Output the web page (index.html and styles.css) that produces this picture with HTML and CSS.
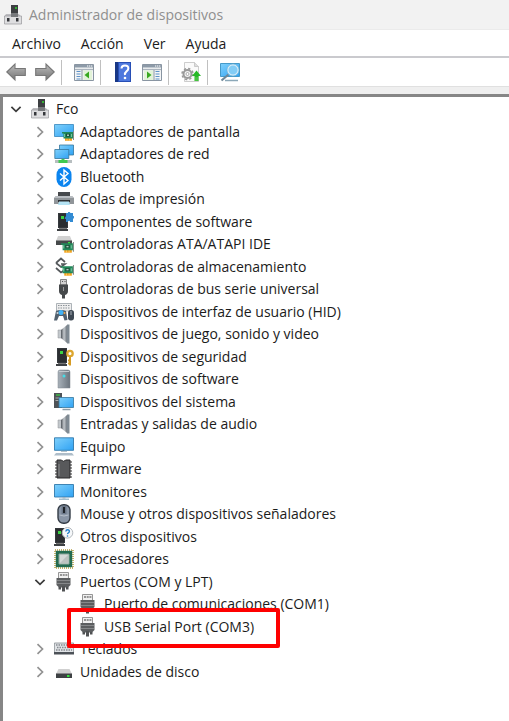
FILE: index.html
```html
<!DOCTYPE html>
<html lang="es">
  <head>
    <meta charset="UTF-8">
    <meta name="viewport" content="width=device-width, initial-scale=1.0">
    <title>Administrador de dispositivos</title>
    <link rel="stylesheet" href="styles.css">
  </head>
  <body>
    <!-- Piezas que se repiten en varios iconos -->
    <svg class="defs" aria-hidden="true">
      <defs>
        <linearGradient id="azul" x1="0" y1="0" x2="1" y2="1">
          <stop offset="0" stop-color="#7fd0fb"/><stop offset="1" stop-color="#2fa2f4"/>
        </linearGradient>
        <linearGradient id="gris" x1="0" y1="0" x2="1" y2="0">
          <stop offset="0" stop-color="#a9b2ba"/><stop offset="1" stop-color="#6b747d"/>
        </linearGradient>
        <linearGradient id="cono" x1="0" y1="0" x2="1" y2="0">
          <stop offset="0" stop-color="#50565c"/><stop offset=".5" stop-color="#c3c8cc"/><stop offset="1" stop-color="#727a82"/>
        </linearGradient>
        <linearGradient id="metal" x1="0" y1="0" x2="0" y2="1">
          <stop offset="0" stop-color="#bdbdbd"/><stop offset="1" stop-color="#747474"/>
        </linearGradient>
        <symbol id="cerrado" viewBox="0 0 12 12"><path d="M3.5 1.2 8.5 6l-5 4.8" fill="none" stroke="#929292" stroke-width="1.7"/></symbol>
        <symbol id="abierto" viewBox="0 0 12 12"><path d="M1.4 3.8 6 8.4l4.6-4.6" fill="none" stroke="#3c3c3c" stroke-width="1.7"/></symbol>
        <symbol id="placa" viewBox="0 0 12 10">
          <path d="M3 7h7v2.8H3z" fill="#f2a11d"/><path d="M5 7.5v2.3M7.5 7.5v2.3" stroke="#ffd777" stroke-width=".7"/>
          <path d="M0 1h11v6.5H1.5V2.5H0z" fill="#22885a"/><path d="M11 0h1v9h-1z" fill="#87908c"/>
          <path d="M4 2.7h4v3H4z" fill="#174c36"/><path d="M5 3.5h2v1.4H5z" fill="#a9cfbd"/><path d="M2.5 3v3M9.5 3v3" stroke="#78c49f"/>
        </symbol>
        <symbol id="pc" viewBox="0 0 20 20">
          <path d="M8 0h7v11H8z" fill="#3d3f42"/><path d="M12 2h2v2h-2z" fill="#35b135"/>
          <path d="M3 9h13l2 3H1z" fill="#bcbcc0"/><path d="M1.500 11h17v8h-17z" fill="#dedee0" stroke="#98989c" stroke-width=".7"/>
          <path d="M4 13h2.500v3.500H4zM13 13h2.500v3.500H13z" fill="#35373b"/><path d="M8 8h7v4H8z" fill="#77797c"/>
        </symbol>
        <symbol id="torre" viewBox="0 0 20 20">
          <path d="M4 1h10v15H4z" fill="#35393d"/><path d="M5 2h8v13H5z" fill="#2b2e31"/>
          <path d="M7 4h3v3H7z" fill="#3bd343"/><path d="M3 17h11v2H3z" fill="#3e4144"/><path d="M5 16h8v1H5z" fill="#777"/>
        </symbol>
        <symbol id="altavoz" viewBox="0 0 20 20">
          <path d="M4 6h4v8H4z" fill="#c3c8cc" stroke="#8c9297" stroke-width=".5"/><path d="M7 6l6-5v18l-6-5z" fill="url(#cono)"/>
          <path d="M13 .5h2.500v19H13z" fill="#7f8a93"/>
        </symbol>
        <symbol id="puerto" viewBox="0 0 20 20">
          <path d="M4.500.500h10v6h-10z" fill="#f0f0f0" stroke="#8a8a8a" stroke-width=".9"/><path d="M6 3h2M8.700 3h2M11.400 3h2" stroke="#777" stroke-width="1.300"/>
          <path d="M2.500 6h14v7L14 15.500H5L2.500 13z" fill="#5c5e60"/><path d="M3 8.500h13M3 11.500h13" stroke="#8b8d8f" stroke-width=".9"/>
          <path d="M4.500 15h2.500v2.500H4.500zM12 15h2.500v2.500H12zM8 14h3v5.500H8z" fill="#505254"/>
        </symbol>
        <symbol id="ventana" viewBox="0 0 20 17">
          <path d="M.5.5h19v16H.5z" fill="#f4f5f6" stroke="#8995a2"/><path d="M1 1h18v2.5H1z" fill="#8d9aa8"/>
          <path d="M13 2h1.3M15 2h1.3M17 2h1.3" stroke="#fff"/><path d="M1 5.5h18" stroke="#aab3bd" stroke-width="1.3"/>
        </symbol>
      </defs>
    </svg>

    <header class="titulo">
      <svg class="icono"><use href="#pc"/></svg>
      <h1>Administrador de dispositivos</h1>
    </header>

    <nav class="menu">
      <button>Archivo</button>
      <button>Acción</button>
      <button>Ver</button>
      <button>Ayuda</button>
    </nav>

    <div class="barra">
      <button aria-label="Atrás"><svg class="icono" viewBox="0 0 20 20"><path d="M.8 10 9 2v4.500h10.300v7H9V18z" fill="url(#metal)" stroke="#777" stroke-width="1.100"/></svg></button>
      <button aria-label="Adelante"><svg class="icono" viewBox="0 0 20 20"><path d="M19.200 10 11 2v4.500H.7v7H11V18z" fill="url(#metal)" stroke="#777" stroke-width="1.100"/></svg></button>
      <span class="separador"></span>
      <button aria-label="Mostrar u ocultar el árbol de consola"><svg class="icono" viewBox="0 0 20 20"><use href="#ventana" y="2" width="20" height="17"/><path d="M2.500 9.500h4M2.500 12h4M2.500 14.500h4M2.500 17h4" stroke="#5d92c8" stroke-width="1.200"/><path d="M8 8v10" stroke="#8995a2"/><path d="M9.500 8.500H18V18H9.500z" fill="#e2f3d8"/><path d="M15 9.500v7L10.500 13z" fill="#38a820"/></svg></button>
      <span class="separador"></span>
      <button aria-label="Ayuda"><svg class="icono" viewBox="0 0 20 20"><path d="M2 0h16v20H2z" fill="#274eb5"/><path d="M6 1h11v18H6z" fill="#4d78dd"/><path d="M2 0h3v20H2z" fill="#183786"/><path d="M8.500 6.500Q8.500 3.500 12 3.500t3.300 3q0 1.500-1.800 2.900T12 13" fill="none" stroke="#fff" stroke-width="2"/><circle cx="12" cy="16" r="1.300" fill="#fff"/></svg></button>
      <button aria-label="Propiedades"><svg class="icono" viewBox="0 0 20 20"><use href="#ventana" y="2" width="20" height="17"/><path d="M13.500 9.500h4M13.500 12h4M13.500 14.500h4M13.500 17h4" stroke="#5d92c8" stroke-width="1.200"/><path d="M12 8v10" stroke="#8995a2"/><path d="M2 8.500h9V18H2z" fill="#e2f3d8"/><path d="M5 9.500v7L9.500 13z" fill="#38a820"/></svg></button>
      <span class="separador"></span>
      <button aria-label="Actualizar controlador"><svg class="icono" viewBox="0 0 20 20"><path d="M3.500.5h10l4 4v15h-14z" fill="#fafafa" stroke="#c0c0c0" stroke-width=".8"/><path d="M13.500.5v4h4" fill="#ddd" stroke="#bbb" stroke-width=".7"/><circle cx="6.500" cy="12" r="4" fill="#f4f4f4" stroke="#9a9a9a" stroke-width="2"/><circle cx="6.500" cy="12" r="5.500" fill="none" stroke="#999" stroke-width="1.500" stroke-dasharray="2.200 2.120"/><circle cx="6.500" cy="12" r="1.500" fill="#fff" stroke="#999" stroke-width=".8"/><path d="M15.500 8.500 20 14h-2.500v5h-4v-5H11z" fill="#27b927"/><path d="M13.500 16h4M13.500 18h4" stroke="#8adf76" stroke-width=".6"/></svg></button>
      <span class="separador"></span>
      <button aria-label="Buscar cambios de hardware"><svg class="icono" viewBox="0 0 20 20"><path d="M.5 1.500h19v13H.5z" fill="url(#azul)" stroke="#469ac9"/><path d="M5 18.500h13" stroke="#8ca8b8" stroke-width="1.500"/><path d="m8.500 12.500-7 6" stroke="#6e8798" stroke-width="2.200"/><circle cx="13" cy="8" r="5.300" fill="#83ccf5" stroke="#d6edfa" stroke-width="1.500"/><circle cx="13" cy="8" r="6" fill="none" stroke="#6faed0" stroke-width=".6"/></svg></button>
    </div>

    <main class="panel">
      <ul class="arbol">
        <li>
          <div class="fila"><button class="flecha" aria-label="Contraer Fco"><svg><use href="#abierto"/></svg></button><svg class="icono"><use href="#pc"/></svg><span>Fco</span></div>
          <ul>
            <li class="fila"><button class="flecha" aria-label="Expandir"><svg><use href="#cerrado"/></svg></button>
              <svg class="icono" viewBox="0 0 20 20"><path d="M.5 2.500h19v12H.5z" fill="url(#azul)" stroke="#3687bd" stroke-width=".8"/><use href="#placa" x="8" y="9" width="12" height="10"/></svg><span>Adaptadores de pantalla</span></li>
            <li class="fila"><button class="flecha" aria-label="Expandir"><svg><use href="#cerrado"/></svg></button>
              <svg class="icono" viewBox="0 0 20 20"><path d="M5.500 1h14v10h-14z" fill="url(#azul)" stroke="#35769d" stroke-width=".8"/><path d="M.8 5.500h14v9H.8z" fill="url(#azul)" stroke="#35769d" stroke-width=".8"/><path d="M1 17.500h17" stroke="#b7bec0" stroke-width="3"/><path d="M7.500 15h3v1h3v3h-9v-3h3z" fill="#3fca50"/></svg><span>Adaptadores de red</span></li>
            <li class="fila"><button class="flecha" aria-label="Expandir"><svg><use href="#cerrado"/></svg></button>
              <svg class="icono" viewBox="0 0 20 20"><rect x="2.500" width="15" height="20" rx="7.500" fill="#0b84ef"/><path d="m6 6.500 8 7-4 3.500V3l4 3.500-8 7" fill="none" stroke="#fff" stroke-width="1.400"/></svg><span>Bluetooth</span></li>
            <li class="fila"><button class="flecha" aria-label="Expandir"><svg><use href="#cerrado"/></svg></button>
              <svg class="icono" viewBox="0 0 20 20"><path d="M4 3h12v5H4z" fill="#46494c"/><path d="M2 7h16l2 2v6H0V9z" fill="#909599"/><path d="M2 7h16l1.500 2H.5z" fill="#b9bdc1"/><path d="M4 11h12v2H4z" fill="#2e3134"/><path d="M5 12.500h10l1 3.500H4z" fill="#b4e3f4"/></svg><span>Colas de impresión</span></li>
            <li class="fila"><button class="flecha" aria-label="Expandir"><svg><use href="#cerrado"/></svg></button>
              <svg class="icono" viewBox="0 0 20 20"><use href="#torre" width="20" height="20"/><path d="M12 1h2q0-2 1.500-1T16 1h3v3q1.800 0 1 1.500T19 7v3h-3q0-2-1.500-1T14 10h-2V7q-2 0-1-1.500T12 4z" fill="#328bd3"/></svg><span>Componentes de software</span></li>
            <li class="fila"><button class="flecha" aria-label="Expandir"><svg><use href="#cerrado"/></svg></button>
              <svg class="icono" viewBox="0 0 20 20"><path d="M4 2h12l2 5H2z" fill="#d2d2d2"/><path d="M2 6.500h16V11H2z" fill="#46494b"/><path d="M14 8h2v1.500h-2z" fill="#38e23e"/><use href="#placa" x="7" y="8" width="13" height="11"/></svg><span>Controladoras ATA/ATAPI IDE</span></li>
            <li class="fila"><button class="flecha" aria-label="Expandir"><svg><use href="#cerrado"/></svg></button>
              <svg class="icono" viewBox="0 0 20 20"><path d="m2 6 5-4.500L11 5M2 6l5 4 4-3H7M2 11l5 4.500 3-2" fill="none" stroke="#54585b" stroke-width="1.700"/><use href="#placa" x="7" y="8" width="13" height="11"/></svg><span>Controladoras de almacenamiento</span></li>
            <li class="fila"><button class="flecha" aria-label="Expandir"><svg><use href="#cerrado"/></svg></button>
              <svg class="icono" viewBox="0 0 20 20"><path d="M6.500.5h6V6h-6z" fill="#d2d2d2" stroke="#777" stroke-width=".9"/><path d="M8 2.500h1M10.500 2.500h1" stroke="#555"/><path d="M5 5.500h9V12q0 3-3 4v3.500H8V16q-3-1-3-4z" fill="#46494b"/><path d="M9.500 8v4" stroke="#9a9a9a"/></svg><span>Controladoras de bus serie universal</span></li>
            <li class="fila"><button class="flecha" aria-label="Expandir"><svg><use href="#cerrado"/></svg></button>
              <svg class="icono" viewBox="0 0 20 20"><path d="M2.500 1.500h15V9h-15z" fill="#eee" stroke="#99a1a7" stroke-width=".8"/><path d="M4 3.500h12M4 6h12" stroke="#8c9399" stroke-width="1.200" stroke-dasharray="1.500 1"/><path d="M2 9q5-2 10 0l1.500 9-3 .5L9 14H5l-2 4.500H0z" fill="#52616f"/><circle cx="7" cy="10.500" r="2.500" fill="#42b3f6"/><circle cx="10.500" cy="11" r="1" fill="#eea443"/><circle cx="3.500" cy="11" r="1" fill="#cfd4d8"/><rect x="14" y="8" width="6" height="10.500" rx="2.700" fill="#3e4954"/><path d="M17 9v4" stroke="#aab2ba"/></svg><span>Dispositivos de interfaz de usuario (HID)</span></li>
            <li class="fila"><button class="flecha" aria-label="Expandir"><svg><use href="#cerrado"/></svg></button>
              <svg class="icono"><use href="#altavoz"/></svg><span>Dispositivos de juego, sonido y video</span></li>
            <li class="fila"><button class="flecha" aria-label="Expandir"><svg><use href="#cerrado"/></svg></button>
              <svg class="icono" viewBox="0 0 20 20"><use href="#torre" x="-1" width="20" height="20"/><circle cx="16" cy="6.500" r="2.700" fill="#fff" stroke="#dda62e" stroke-width="2.300"/><path d="M16 9.500v9M16 13.500h-2M16 16.500h-2" stroke="#d69b24" stroke-width="2"/></svg><span>Dispositivos de seguridad</span></li>
            <li class="fila"><button class="flecha" aria-label="Expandir"><svg><use href="#cerrado"/></svg></button>
              <svg class="icono" viewBox="0 0 20 20"><path d="M4 3q0-2 2-2h8q2 0 2 2v16H4z" fill="url(#gris)" stroke="#7c858d" stroke-width=".5"/><path d="M5 2.500h10" stroke="#c3c9ce"/><circle cx="10" cy="7" r="1.500" fill="#45dce5"/></svg><span>Dispositivos de software</span></li>
            <li class="fila"><button class="flecha" aria-label="Expandir"><svg><use href="#cerrado"/></svg></button>
              <svg class="icono" viewBox="0 0 20 20"><path d="M0 1h8v15H0z" fill="#4e5357"/><path d="M2 3h4" stroke="#3fd343" stroke-width="1.200"/><path d="M1.500 6h5M1.500 8.500h3" stroke="#aaa"/><path d="M5 5.500h14.500v10H5z" fill="url(#azul)" stroke="#35769d" stroke-width=".8"/><path d="M8.500 17.500h8" stroke="#8d9ca7" stroke-width="1.500"/></svg><span>Dispositivos del sistema</span></li>
            <li class="fila"><button class="flecha" aria-label="Expandir"><svg><use href="#cerrado"/></svg></button>
              <svg class="icono"><use href="#altavoz"/></svg><span>Entradas y salidas de audio</span></li>
            <li class="fila"><button class="flecha" aria-label="Expandir"><svg><use href="#cerrado"/></svg></button>
              <svg class="icono" viewBox="0 0 20 20"><path d="M.5.800h19v12.500H.5z" fill="url(#azul)" stroke="#3179ab" stroke-width=".9"/><path d="M7 14.500h6" stroke="#b5c3cb"/><path d="M2 16h16l2 2.500H0z" fill="#aebdc9"/></svg><span>Equipo</span></li>
            <li class="fila"><button class="flecha" aria-label="Expandir"><svg><use href="#cerrado"/></svg></button>
              <svg class="icono" viewBox="0 0 20 20"><path d="M1 3h17M1 6h17M1 9h17M1 12h17M1 15h17M1 18h17" stroke="#777" stroke-width="1.500"/><path d="M3 1h4q2.500 2.500 5 0h4v18H3z" fill="#58595b" stroke="#29292a"/><path d="M5 5v12" stroke="#8a8c8e"/></svg><span>Firmware</span></li>
            <li class="fila"><button class="flecha" aria-label="Expandir"><svg><use href="#cerrado"/></svg></button>
              <svg class="icono" viewBox="0 0 20 20"><path d="M.5 2.500h19V15H.5z" fill="url(#azul)" stroke="#3179ab" stroke-width=".9"/><path d="M8.500 15h3v1.500h-3z" fill="#9fb3bf"/><path d="M5 17.200h10" stroke="#8fafc2" stroke-width="1.200"/></svg><span>Monitores</span></li>
            <li class="fila"><button class="flecha" aria-label="Expandir"><svg><use href="#cerrado"/></svg></button>
              <svg class="icono" viewBox="0 0 20 20"><rect x="4" y=".7" width="12" height="18.600" rx="5.500" fill="#8995a6" stroke="#343c46" stroke-width="1.400"/><path d="M7.500 2h5v8h-5z" fill="#6b7788"/><path d="M10 3v6" stroke="#1d2228" stroke-width="2"/><path d="M5.500 11q4.500 2 9 0" fill="none" stroke="#b6bfca"/></svg><span>Mouse y otros dispositivos señaladores</span></li>
            <li class="fila"><button class="flecha" aria-label="Expandir"><svg><use href="#cerrado"/></svg></button>
              <svg class="icono" viewBox="0 0 20 20"><use href="#torre" x="-3" width="20" height="20"/><circle cx="13.500" cy="5.800" r="5.300" fill="#f6f8fa" stroke="#b3b8bd"/><path d="M11.800 4.500q.2-1.700 1.900-1.700t1.700 1.500q0 1-1 1.500t-.8 1.400" fill="none" stroke="#2380cb" stroke-width="1.400"/><circle cx="13.500" cy="9" r=".8" fill="#2380cb"/></svg><span>Otros dispositivos</span></li>
            <li class="fila"><button class="flecha" aria-label="Expandir"><svg><use href="#cerrado"/></svg></button>
              <svg class="icono" viewBox="0 0 20 20"><path d="M1 1h18v18H1z" fill="none" stroke="#b29a3d" stroke-width="1.500" stroke-dasharray="1 1"/><path d="M1.800 1.800h16.400v16.400H1.800z" fill="#236b51"/><path d="M5 5h10v10H5z" fill="#d5d9d8" stroke="#8ca79b"/><path d="M6 14 14 6v8z" fill="#bcc2c0"/></svg><span>Procesadores</span></li>
            <li>
              <div class="fila"><button class="flecha" aria-label="Contraer Puertos"><svg><use href="#abierto"/></svg></button><svg class="icono"><use href="#puerto"/></svg><span>Puertos (COM y LPT)</span></div>
              <ul>
                <li class="fila hoja"><svg class="icono"><use href="#puerto"/></svg><span>Puerto de comunicaciones (COM1)</span></li>
                <li class="fila hoja marcada"><svg class="icono"><use href="#puerto"/></svg><span>USB Serial Port (COM3)</span></li>
              </ul>
            </li>
            <li class="fila"><button class="flecha" aria-label="Expandir"><svg><use href="#cerrado"/></svg></button>
              <svg class="icono" viewBox="0 0 20 20"><path d="M.4 4h19.200v9.500H.4z" fill="#e0e3e6" stroke="#858b91" stroke-width=".8"/><path d="M0 13h20v2.500H0z" fill="#4c5157"/><path d="M2 6h16M3 8.500h14M2 11h16" stroke="#858b91" stroke-width="1.300" stroke-dasharray="1.500 1"/></svg><span>Teclados</span></li>
            <li class="fila"><button class="flecha" aria-label="Expandir"><svg><use href="#cerrado"/></svg></button>
              <svg class="icono" viewBox="0 0 20 20"><path d="M4.500 7h11L18 12H2z" fill="#d0d0d0"/><path d="M2 11.500h16V16H2z" fill="#3e4144"/><path d="M13 13h2.500v2H13z" fill="#36df3d"/></svg><span>Unidades de disco</span></li>
          </ul>
        </li>
      </ul>
    </main>
  </body>
</html>
```
FILE: styles.css
```css
* { box-sizing: border-box; }
body {
    font-family: 'Open Sans', 'Noto Sans', sans-serif;
    font-size: 14px;
    color: #1b1b1b;
    background-color: #ffffff;
    min-height: 100vh;
    display: flex;
    flex-direction: column;
    margin: 0;
}
button { font: inherit; color: inherit; border: none; background: none; padding: 0; margin: 0; }
ul { list-style: none; margin: 0; padding: 0; }
.defs { position: absolute; width: 0; height: 0; }
.icono { width: 20px; height: 20px; flex: none; }

.titulo { display: flex; align-items: center; gap: 6px; height: 30px; padding-left: 3px; background-color: #f2f2f2; border-bottom: 1px solid #ebebeb; }
.titulo h1 { margin: 0; font-size: 14px; font-weight: normal; color: #8f8f8f; }

.menu { display: flex; height: 28px; padding-left: 2px; border-bottom: 2px solid #cacace; }
.menu button { padding: 0 10px; }
.menu button:hover, .barra button:hover { background-color: #e5f3ff; }

.barra { display: flex; align-items: center; height: 29px; padding-left: 1px; border-bottom: 1px solid #e0e0e0; }
.barra button { display: flex; align-items: center; justify-content: center; width: 29px; height: 26px; }
.separador { width: 1px; height: 25px; margin: 0 7px 0 2px; background-color: #c0c0c0; }

.panel { flex: 1; display: flex; border-top: 7px solid #efefef; }
.arbol { flex: 1; border: 3px solid #868686; border-width: 3px 0 0 3px; padding: 1px 0 0 3px; font-size: 15px; line-height: 1.5em; }
.arbol ul { padding-left: 24px; }
.fila { display: flex; align-items: center; height: 1.5em; }
.fila span { font-size: 14px; margin-left: 6px; white-space: nowrap; }
.flecha { display: flex; align-items: center; justify-content: center; width: 20px; height: 20px; margin-right: 4px; }
.flecha svg { width: 12px; height: 12px; }
.hoja { padding-left: 24px; }

/* recuadro rojo sobre el puerto COM3 */
.marcada { position: relative; width: fit-content; }
.marcada::after { content: ''; position: absolute; top: -8px; right: -26px; bottom: -10px; left: 13px; border: 4px solid #fe0000; border-radius: 2px; }
```
